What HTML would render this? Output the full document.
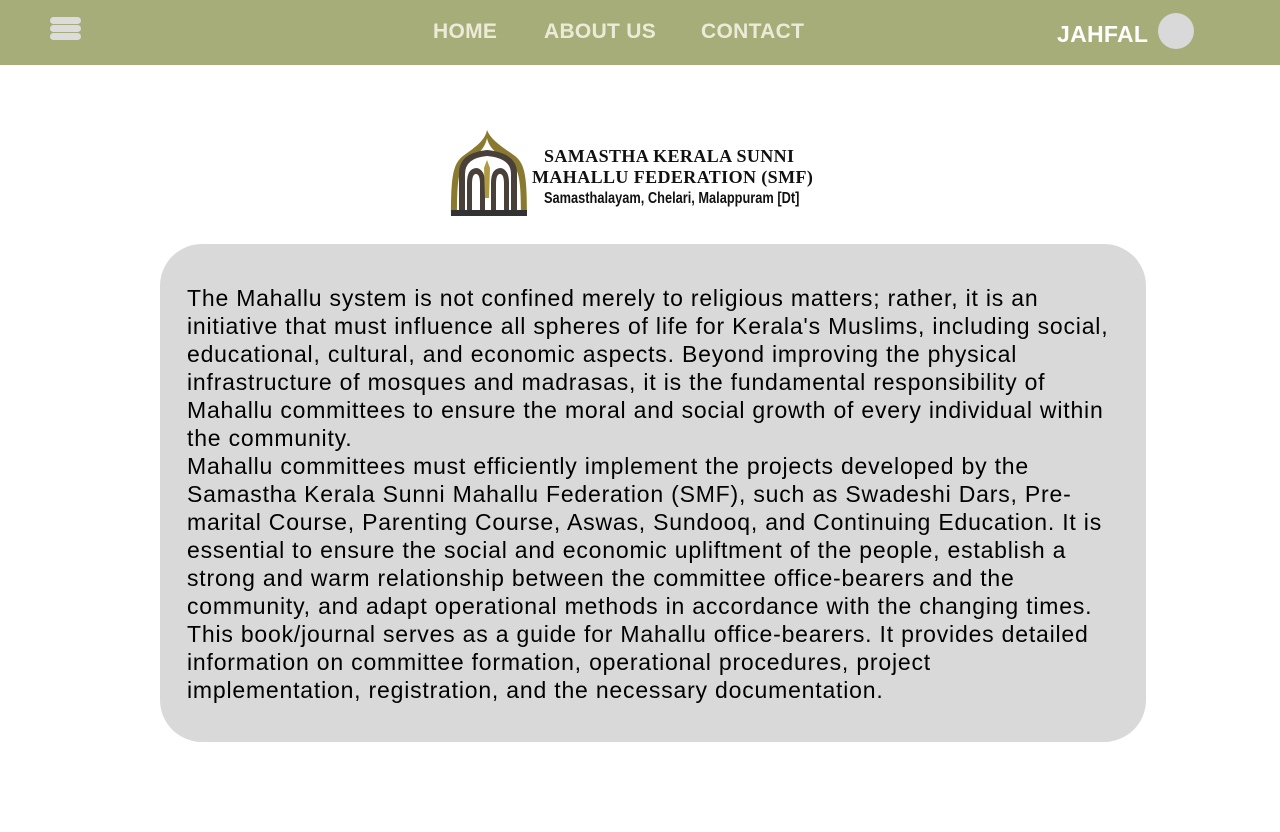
<!DOCTYPE html>
<html><head><meta charset="utf-8"><style>
*{margin:0;padding:0;box-sizing:border-box}
body{width:1280px;height:832px;background:#fff;font-family:"Liberation Sans",sans-serif;position:relative;overflow:hidden}
.nav{position:absolute;left:0;top:0;width:1280px;height:65px;background:#a6ad78}
.burger{position:absolute;left:50px;top:17px;width:31px}
.burger div{height:7px;background:#dcdcdc;border-radius:4px;margin-bottom:1px}
.links{position:absolute;top:20px;font-weight:bold;font-size:21px;color:#ecebd8;letter-spacing:0.3px}
.user{position:absolute;left:1057px;top:21px;font-weight:bold;font-size:23px;color:#fff;letter-spacing:0.3px}
.av{position:absolute;left:1158px;top:13px;width:36px;height:36px;border-radius:50%;background:#d9d9d9}
.logo{position:absolute;left:449px;top:128px}
.card{position:absolute;left:160px;top:244px;width:986px;height:498px;background:#d9d9d9;border-radius:42px}
.txt{position:absolute;left:187px;top:284px;font-size:23px;line-height:28px;color:#000;white-space:nowrap;letter-spacing:0.8px}
</style></head><body>
<div class="nav">
<div class="burger"><div></div><div></div><div></div></div>
<div class="links" style="left:433px">HOME</div>
<div class="links" style="left:544px">ABOUT US</div>
<div class="links" style="left:701px">CONTACT</div>
<div class="user">JAHFAL</div>
<div class="av"></div>
</div>
<div class="logo">
<svg width="80" height="90" viewBox="0 0 80 90">
<path d="M38 2 C36 12 28 18 14 28 C4 36 2 48 2 88 L8 88 C8 50 10 40 18 34 C30 26 36 20 38 10 C40 20 48 26 60 34 C70 40 72 50 72 88 L78 88 C78 48 76 36 66 28 C52 18 42 12 38 2Z" fill="#8a7a30"/>
<path d="M10 88 V45 Q10 25 38 22 Q68 25 68 45 V88 H62 V46 Q62 30 38 28 Q16 30 16 46 V88Z" fill="#4a403a"/>
<path d="M18 88 V55 Q18 40 28 40 Q36 42 36 55 V88 H31 V56 Q31 46 27 46 Q23 46 23 56 V88Z" fill="#4a403a"/>
<path d="M42 88 V55 Q42 40 52 40 Q60 42 60 55 V88 H55 V56 Q55 46 51 46 Q47 46 47 56 V88Z" fill="#4a403a"/>
<path d="M38 32 L41 40 L40 70 L36 70 L35 40Z" fill="#b09a40"/>
<rect x="2" y="82" width="76" height="6" fill="#333"/>
</svg>
<div style="position:absolute;left:95px;top:18px;font-family:'Liberation Serif',serif;font-weight:bold;font-size:18px;line-height:21px;white-space:nowrap;color:#111;letter-spacing:0.4px">SAMASTHA KERALA SUNNI<br><span style="margin-left:-12px">MAHALLU FEDERATION (SMF)</span></div>
<div style="position:absolute;left:95px;top:62px;font-weight:bold;font-size:16px;white-space:nowrap;color:#111;transform:scaleX(0.8);transform-origin:left">Samasthalayam, Chelari, Malappuram [Dt]</div>
</div>
<div class="card"></div>
<div class="txt">The Mahallu system is not confined merely to religious matters; rather, it is an<br>initiative that must influence all spheres of life for Kerala's Muslims, including social,<br>educational, cultural, and economic aspects. Beyond improving the physical<br>infrastructure of mosques and madrasas, it is the fundamental responsibility of<br>Mahallu committees to ensure the moral and social growth of every individual within<br>the community.<br>Mahallu committees must efficiently implement the projects developed by the<br>Samastha Kerala Sunni Mahallu Federation (SMF), such as Swadeshi Dars, Pre-<br>marital Course, Parenting Course, Aswas, Sundooq, and Continuing Education. It is<br>essential to ensure the social and economic upliftment of the people, establish a<br>strong and warm relationship between the committee office-bearers and the<br>community, and adapt operational methods in accordance with the changing times.<br>This book/journal serves as a guide for Mahallu office-bearers. It provides detailed<br>information on committee formation, operational procedures, project<br>implementation, registration, and the necessary documentation.</div>
</body></html>
